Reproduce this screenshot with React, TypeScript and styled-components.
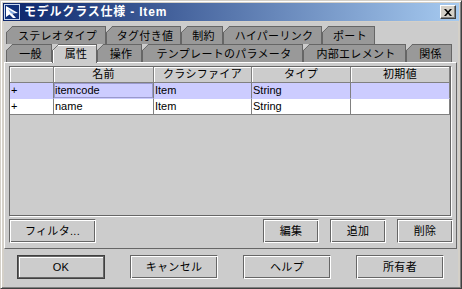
import React from 'react';
import styled, { createGlobalStyle } from 'styled-components';

const GlobalStyle = createGlobalStyle`
  html, body {
    margin: 0;
    padding: 0;
    background: #d4d0c8;
  }
  body {
    font-family: "Liberation Sans", "Noto Sans CJK JP", sans-serif;
  }
  * {
    box-sizing: border-box;
  }
`;

const Window = styled.div`
  width: 462px;
  height: 289px;
  display: flex;
  flex-direction: column;
  padding: 2px 2px 1px 2px;
  background: #d4d0c8;
  border: 1px solid;
  border-color: #d4d0c8 #404040 #404040 #d4d0c8;
  box-shadow: inset 1px 1px 0 #fff, inset -1px -1px 0 #808080;
`;

const TitleBar = styled.div`
  height: 18px;
  flex-shrink: 0;
  display: flex;
  align-items: center;
  padding: 0 3px 0 1px;
  background: linear-gradient(to right, #0a246a, #a6caf0);
`;

const TitleText = styled.span`
  flex: 1;
  margin-left: 4px;
  color: #fff;
  font-size: 12px;
  font-weight: bold;
  letter-spacing: 0.8px;
  line-height: 1;
  white-space: nowrap;
`;

const CloseButton = styled.div`
  width: 16px;
  height: 14px;
  display: flex;
  align-items: center;
  justify-content: center;
  background: #d4d0c8;
  border: 1px solid;
  border-color: #fff #404040 #404040 #fff;
  box-shadow: inset -1px -1px 0 #808080;
`;

const Body = styled.div`
  flex: 1;
  display: flex;
  flex-direction: column;
  margin: 1px 1px 0 1px;
  padding: 4px 1px 0 0;
  background: #cccccc;
`;

const TabRow = styled.div`
  position: relative;
  z-index: 2;
  height: 18px;
  display: flex;
  align-items: flex-start;
  padding-left: 2px;
`;

const Tab = styled.div<{ $selected?: boolean; $width: number }>`
  position: relative;
  width: ${p => p.$width}px;
  height: ${p => (p.$selected ? 19 : 18)}px;
  display: flex;
  align-items: center;
  justify-content: center;
  padding: 1px 0 0 3px;
  background: ${p => (p.$selected ? '#cccccc' : '#999999')};
  border: 1px solid #666666;
  border-bottom: none;
  box-shadow: ${p => (p.$selected ? 'inset 1px 1px 0 #fff' : 'none')};
  clip-path: polygon(6.5px 0, 100% 0, 100% 100%, 0 100%, 0 6.5px);
  color: #000;
  font-size: 11px;
  letter-spacing: 0.3px;
  line-height: 1;
  white-space: nowrap;

  &::before {
    content: '';
    position: absolute;
    left: -1px;
    top: -1px;
    width: 8px;
    height: 8px;
    background: linear-gradient(135deg, transparent 0 40%, #666666 40% 47%, transparent 47%);
  }
`;

const Panel = styled.div`
  position: relative;
  z-index: 1;
  flex: 1;
  display: flex;
  flex-direction: column;
  padding: 3px 3px 5px 4px;
  border: 1px solid;
  border-color: #fff #666666 #666666 #fff;
`;

const ScrollPane = styled.div`
  flex: 1;
  margin-right: 2px;
  border: 1px solid #666666;
  box-shadow: 1px 1px 0 #fff;
  background: #cccccc;
`;

const Grid = styled.div`
  display: grid;
  grid-template-columns: 44px 100px 98px 99px 99px;
  grid-auto-rows: 16px;
`;

const HeaderCell = styled.div`
  display: flex;
  align-items: center;
  justify-content: center;
  background: #cccccc;
  border-right: 1px solid #808080;
  border-bottom: 1px solid #808080;
  box-shadow: inset 1px 1px 0 #fff;
  font-size: 11px;
  letter-spacing: 0.3px;
  line-height: 1;
`;

const Cell = styled.div<{ $selected?: boolean; $focused?: boolean; $last?: boolean }>`
  display: flex;
  align-items: center;
  padding-left: 1px;
  background: ${p => (p.$selected ? '#ccccff' : '#ffffff')};
  border-right: 1px solid #808080;
  border-bottom: 1px solid ${p => (p.$last ? '#808080' : 'transparent')};
  box-shadow: ${p => (p.$focused ? 'inset 0 0 0 1px #9999cc' : 'none')};
  font-size: 11px;
  line-height: 1;
  white-space: nowrap;
`;

const ButtonRow = styled.div`
  display: flex;
  align-items: center;
  gap: 11px;
  margin-top: 3px;
`;

const Spacer = styled.div`
  flex: 1;
`;

const Button = styled.button<{ $width: number; $default?: boolean }>`
  width: ${p => p.$width}px;
  height: 24px;
  padding: 0;
  background: #cccccc;
  color: #000;
  font-family: "Liberation Sans", "Noto Sans CJK JP", sans-serif;
  font-size: 11px;
  letter-spacing: 0.3px;
  line-height: 1;
  border: 1px solid;
  border-color: ${p => (p.$default ? '#404040' : '#666666 #fff #fff #666666')};
  box-shadow: ${p =>
    p.$default
      ? 'inset 1px 1px 0 #666666, inset -1px -1px 0 #666666, inset 2px 2px 0 #fff'
      : 'inset 1px 1px 0 #fff, inset -1px -1px 0 #666666'};
`;

const Footer = styled.div`
  height: 38px;
  flex-shrink: 0;
  display: flex;
  align-items: flex-start;
  justify-content: space-between;
  padding: 6px 13px 0 13px;
`;

const tabRows = [
  [
    { label: 'ステレオタイプ', width: 100 },
    { label: 'タグ付き値', width: 75 },
    { label: '制約', width: 42 },
    { label: 'ハイパーリンク', width: 99 },
    { label: 'ポート', width: 53 },
  ],
  [
    { label: '一般', width: 46 },
    { label: '属性', width: 45, selected: true },
    { label: '操作', width: 45 },
    { label: 'テンプレートのパラメータ', width: 161 },
    { label: '内部エレメント', width: 103 },
    { label: '関係', width: 46 },
  ],
];

const columns = ['', '名前', 'クラシファイア', 'タイプ', '初期値'];

const rows = [
  ['+', 'itemcode', 'Item', 'String', ''],
  ['+', 'name', 'Item', 'String', ''],
];

const AppIcon = () => (
  <svg width="16" height="16" viewBox="0 0 16 16">
    <rect x="0.5" y="0.5" width="15" height="15" fill="#10307a" stroke="#c8d8f0" />
    <path d="M2 2 L14 9 L8 9.5 L12 14 L9 14 L5.5 10.5 L2 13 Z" fill="#ffffff" />
    <path d="M4 5 L11 9 L7 9.5 Z" fill="#7fa8e0" />
  </svg>
);

const CloseGlyph = () => (
  <svg width="8" height="7" viewBox="0 0 8 7">
    <path d="M0 0h2l2 2.3 2-2.3h2l-3 3.5 3 3.5h-2l-2-2.3-2 2.3h-2l3-3.5z" fill="#000" />
  </svg>
);

export default function App() {
  return (
    <>
      <GlobalStyle />
      <Window>
        <TitleBar>
          <AppIcon />
          <TitleText>モデルクラス仕様 - Item</TitleText>
          <CloseButton>
            <CloseGlyph />
          </CloseButton>
        </TitleBar>
        <Body>
          {tabRows.map((row, i) => (
            <TabRow key={i}>
              {row.map(tab => (
                <Tab key={tab.label} $width={tab.width} $selected={tab.selected}>
                  {tab.label}
                </Tab>
              ))}
            </TabRow>
          ))}
          <Panel>
            <ScrollPane>
              <Grid>
                {columns.map((c, i) => (
                  <HeaderCell key={i}>{c}</HeaderCell>
                ))}
                {rows.map((r, ri) =>
                  r.map((v, ci) => (
                    <Cell
                      key={`${ri}-${ci}`}
                      $selected={ri === 0}
                      $focused={ri === 0 && ci === 1}
                      $last={ri === rows.length - 1}
                    >
                      {v}
                    </Cell>
                  ))
                )}
              </Grid>
            </ScrollPane>
            <ButtonRow>
              <Button $width={87}>フィルタ...</Button>
              <Spacer />
              <Button $width={56}>編集</Button>
              <Button $width={56}>追加</Button>
              <Button $width={56}>削除</Button>
            </ButtonRow>
          </Panel>
          <Footer>
            <Button $width={88} $default>OK</Button>
            <Button $width={88}>キャンセル</Button>
            <Button $width={88}>ヘルプ</Button>
            <Button $width={88}>所有者</Button>
          </Footer>
        </Body>
      </Window>
    </>
  );
}
